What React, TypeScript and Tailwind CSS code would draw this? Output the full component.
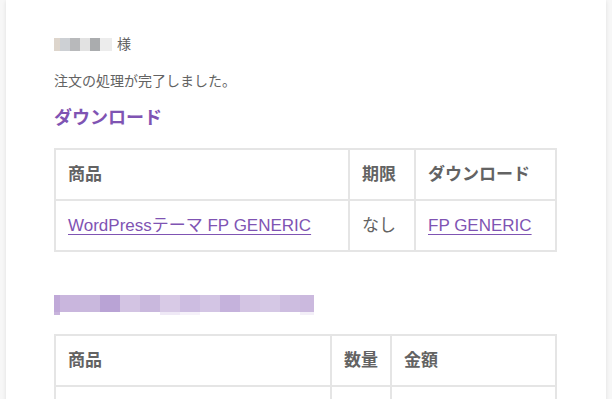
import React from 'react';

type Cell = { text: string; href?: boolean };

const nameTiles = ['#ddd5cc', '#cdd0d4', '#b8b9bb', '#e2e2e2', '#aaacae', '#ececec'];
const nameWidths = [6, 10, 10, 10, 10, 12];

const headTiles = [
  '#c0a9d8', '#c9b6dd', '#c9b8dd', '#b9a3d5', '#d3c4e3', '#c9b8dd', '#d8cae6',
  '#cdbde1', '#d3c5e4', '#c5b2dc', '#d3c4e3', '#d5c8e5', '#cdbde0', '#cbb9de',
];
const headStrip = [
  '#c8b4dc', '#ffffff', '#ffffff', '#ffffff', '#ffffff', '#ffffff', '#efe9f6',
  '#f6f2fa', '#ffffff', '#ffffff', '#ffffff', '#ffffff', '#ffffff', '#f3eff8',
];

const font = 'font-["Liberation_Sans","Noto_Sans_CJK_JP",sans-serif]';

const OrderTable: React.FC<{ widths: number[]; head: string[]; rows: Cell[][] }> = ({ widths, head, rows }) => (
  <table className="w-[503px] table-fixed border-separate border-spacing-0 border border-[#e5e5e5] text-[17px] leading-[25px] text-[#636363]">
    <colgroup>
      {widths.map((w, i) => (
        <col key={i} style={{ width: w }} />
      ))}
    </colgroup>
    <thead>
      <tr>
        {head.map((h) => (
          <th key={h} className="border border-[#e5e5e5] p-3 text-left font-bold">
            {h}
          </th>
        ))}
      </tr>
    </thead>
    <tbody>
      {rows.map((row, r) => (
        <tr key={r}>
          {row.map((c, i) => (
            <td key={i} className="border border-[#e5e5e5] p-3 text-left">
              {c.href ? <a className="text-[#7f54b3] underline underline-offset-[3px]">{c.text}</a> : c.text || '\u00a0'}
            </td>
          ))}
        </tr>
      ))}
    </tbody>
  </table>
);

export default function App() {
  return (
    <div className={`min-h-screen bg-[#f7f7f7] ${font}`}>
      <div className="mx-auto min-h-screen w-[600px] bg-white px-12 pt-[34px] pb-12 shadow-[0_1px_4px_rgba(0,0,0,0.1)]">
        {/* customer name, masked */}
        <p className="mb-4 flex items-center gap-[5px] text-[14px] leading-[21px] text-[#636363]">
          <span className="flex h-[13px]">
            {nameTiles.map((c, i) => (
              <span key={i} className="h-full" style={{ width: nameWidths[i], background: c }} />
            ))}
          </span>
          <span>様</span>
        </p>
        <p className="text-[14px] leading-[21px] text-[#636363]">注文の処理が完了しました。</p>

        <h2 className="mt-[15px] mb-[18px] text-[18px] font-bold leading-[23px] text-[#7f54b3]">ダウンロード</h2>

        <OrderTable
          widths={[294, 66, 141]}
          head={['商品', '期限', 'ダウンロード']}
          rows={[[{ text: 'WordPressテーマ FP GENERIC', href: true }, { text: 'なし' }, { text: 'FP GENERIC', href: true }]]}
        />

        {/* order heading, masked */}
        <div className="mt-10 mb-[18px] h-[24px] pt-[3px]">
          <div className="flex h-[17px]">
            {headTiles.map((c, i) => (
              <span key={i} className={i === 0 ? 'w-[6px]' : i === 13 ? 'w-[14px]' : 'w-[20px]'} style={{ background: c }} />
            ))}
          </div>
          <div className="flex h-[3px]">
            {headStrip.map((c, i) => (
              <span key={i} className={i === 0 ? 'w-[6px]' : i === 13 ? 'w-[14px]' : 'w-[20px]'} style={{ background: c }} />
            ))}
          </div>
        </div>

        <OrderTable
          widths={[276, 60, 165]}
          head={['商品', '数量', '金額']}
          rows={[[{ text: '' }, { text: '' }, { text: '' }]]}
        />
      </div>
    </div>
  );
}
